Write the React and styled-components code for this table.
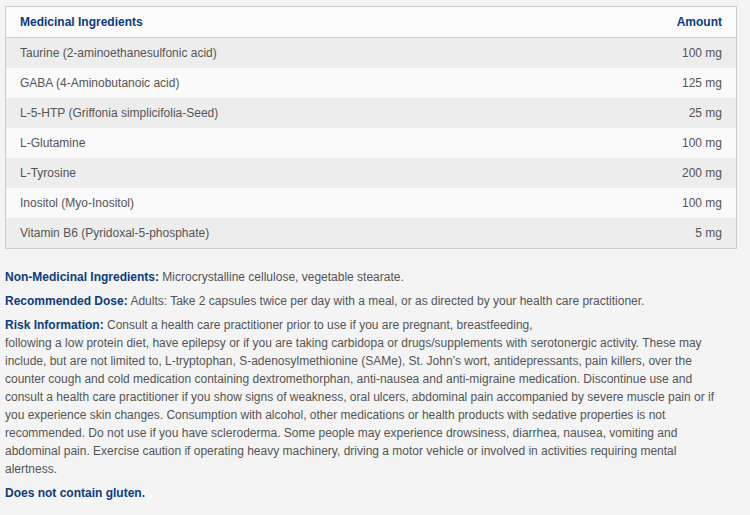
import React from 'react';
import styled, { createGlobalStyle } from 'styled-components';

const Global = createGlobalStyle`
  html, body {
    margin: 0;
    background: #f4f4f4;
    overflow: hidden;
  }
  body {
    font-family: "Liberation Sans", Arial, sans-serif;
    font-size: 12px;
    color: #555;
  }
`;

const Page = styled.div`
  padding: 6px 0 0 5px;
  width: 745px;
`;

const Table = styled.table`
  width: 732px;
  border-collapse: collapse;
  border: 1px solid #cdcdcd;
  margin-bottom: 19px;
`;

const HeadCell = styled.th`
  height: 30px;
  padding: 0 14px;
  background: #fbfbfb;
  border-bottom: 1px solid #cdcdcd;
  color: #0c3c7c;
  font-weight: bold;
  text-align: ${(p) => (p.$right ? 'right' : 'left')};
`;

const Row = styled.tr`
  background: ${(p) => (p.$odd ? '#ededed' : '#fafafa')};
`;

const Cell = styled.td`
  height: 30px;
  padding: 0 14px;
  text-align: ${(p) => (p.$right ? 'right' : 'left')};
`;

const Para = styled.p`
  margin: 0 0 6px;
  line-height: 18px;
  white-space: nowrap;
`;

const Label = styled.strong`
  color: #0c3c7c;
`;

const ingredients = [
  ['Taurine (2-aminoethanesulfonic acid)', '100 mg'],
  ['GABA (4-Aminobutanoic acid)', '125 mg'],
  ['L-5-HTP (Griffonia simplicifolia-Seed)', '25 mg'],
  ['L-Glutamine', '100 mg'],
  ['L-Tyrosine', '200 mg'],
  ['Inositol (Myo-Inositol)', '100 mg'],
  ['Vitamin B6 (Pyridoxal-5-phosphate)', '5 mg'],
];

// line breaks as they fall in the original layout
const riskLines = [
  'following a low protein diet, have epilepsy or if you are taking carbidopa or drugs/supplements with serotonergic activity. These may',
  'include, but are not limited to, L-tryptophan, S-adenosylmethionine (SAMe), St. John’s wort, antidepressants, pain killers, over the',
  'counter cough and cold medication containing dextromethorphan, anti-nausea and anti-migraine medication. Discontinue use and',
  'consult a health care practitioner if you show signs of weakness, oral ulcers, abdominal pain accompanied by severe muscle pain or if',
  'you experience skin changes. Consumption with alcohol, other medications or health products with sedative properties is not',
  'recommended. Do not use if you have scleroderma. Some people may experience drowsiness, diarrhea, nausea, vomiting and',
  'abdominal pain. Exercise caution if operating heavy machinery, driving a motor vehicle or involved in activities requiring mental',
  'alertness.',
];

export default function App() {
  return (
    <Page>
      <Global />
      <Table>
        <thead>
          <tr>
            <HeadCell>Medicinal Ingredients</HeadCell>
            <HeadCell $right>Amount</HeadCell>
          </tr>
        </thead>
        <tbody>
          {ingredients.map(([name, amount], i) => (
            <Row key={name} $odd={i % 2 === 0}>
              <Cell>{name}</Cell>
              <Cell $right>{amount}</Cell>
            </Row>
          ))}
        </tbody>
      </Table>
      <Para>
        <Label>Non-Medicinal Ingredients:</Label> Microcrystalline cellulose, vegetable stearate.
      </Para>
      <Para>
        <Label>Recommended Dose:</Label> Adults: Take 2 capsules twice per day with a meal, or as directed by your health care practitioner.
      </Para>
      <Para>
        <Label>Risk Information:</Label> Consult a health care practitioner prior to use if you are pregnant, breastfeeding,
        {riskLines.map((line) => (
          <React.Fragment key={line}>
            <br />
            {line}
          </React.Fragment>
        ))}
      </Para>
      <Para>
        <Label>Does not contain gluten.</Label>
      </Para>
    </Page>
  );
}
